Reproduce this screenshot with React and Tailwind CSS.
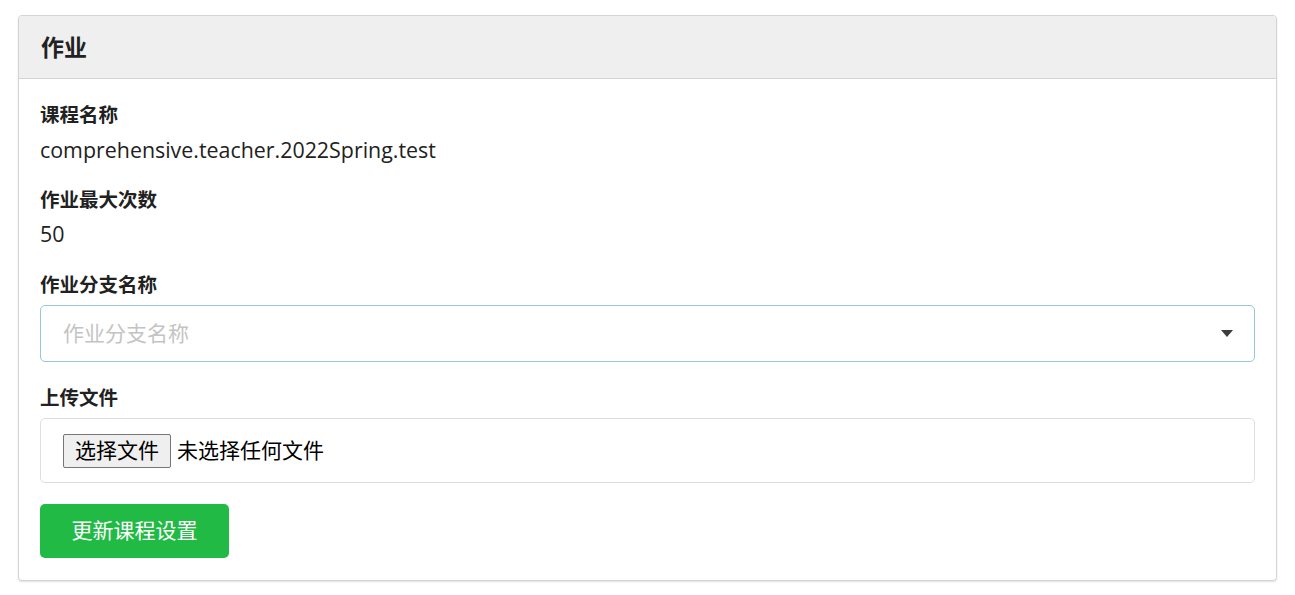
export default function App() {
  const font = { fontFamily: '"Open Sans", "Noto Sans CJK SC", sans-serif' };
  return (
    <div className="bg-white min-h-[595px] pt-[15px] px-[18px] text-[#212121]" style={font}>
      <div className="border border-[#d4d4d5] rounded-[4px] shadow-[0_1px_2px_rgba(0,0,0,0.12)] bg-white overflow-hidden">
        <div className="bg-[#efefef] h-[63px] border-b border-[#d4d4d5] flex items-center px-[22px]">
          <h2 className="text-[23px] font-bold leading-none">作业</h2>
        </div>
        <div className="px-[21px] pt-[24px] pb-[22px]">
          <div className="text-[19.5px] font-bold leading-[24px]">课程名称</div>
          <div className="text-[21.4px] leading-[24px] mt-[11px]">comprehensive.teacher.2022Spring.test</div>
          <div className="text-[19.5px] font-bold leading-[24px] mt-[26px]">作业最大次数</div>
          <div className="text-[21.4px] leading-[24px] mt-[10px]">50</div>
          <div className="text-[19.5px] font-bold leading-[24px] mt-[27px]">作业分支名称</div>
          <div className="mt-[8px] h-[57px] border border-[#96c8da] rounded-[5px] flex items-center justify-between pl-[22px] pr-[21px]">
            <span className="text-[21px] text-[#c4c4c4]">作业分支名称</span>
            <svg width="12" height="7" viewBox="0 0 12 7"><path d="M0 0h12L6 7z" fill="#3c3c3c" /></svg>
          </div>
          <div className="text-[19.5px] font-bold leading-[24px] mt-[24px]">上传文件</div>
          <div className="mt-[8px] h-[65px] border border-[#dedede] rounded-[5px] flex items-center pl-[22px]">
            <button className="h-[34px] px-[11px] bg-[#efefef] border border-[#767676] rounded-[2px] text-[21px] leading-none text-black">选择文件</button>
            <span className="ml-[6px] text-[21px] text-black">未选择任何文件</span>
          </div>
          <button className="mt-[21px] h-[54px] w-[189px] bg-[#21ba45] rounded-[5px] text-white text-[21px] flex items-center justify-center">更新课程设置</button>
        </div>
      </div>
    </div>
  );
}
